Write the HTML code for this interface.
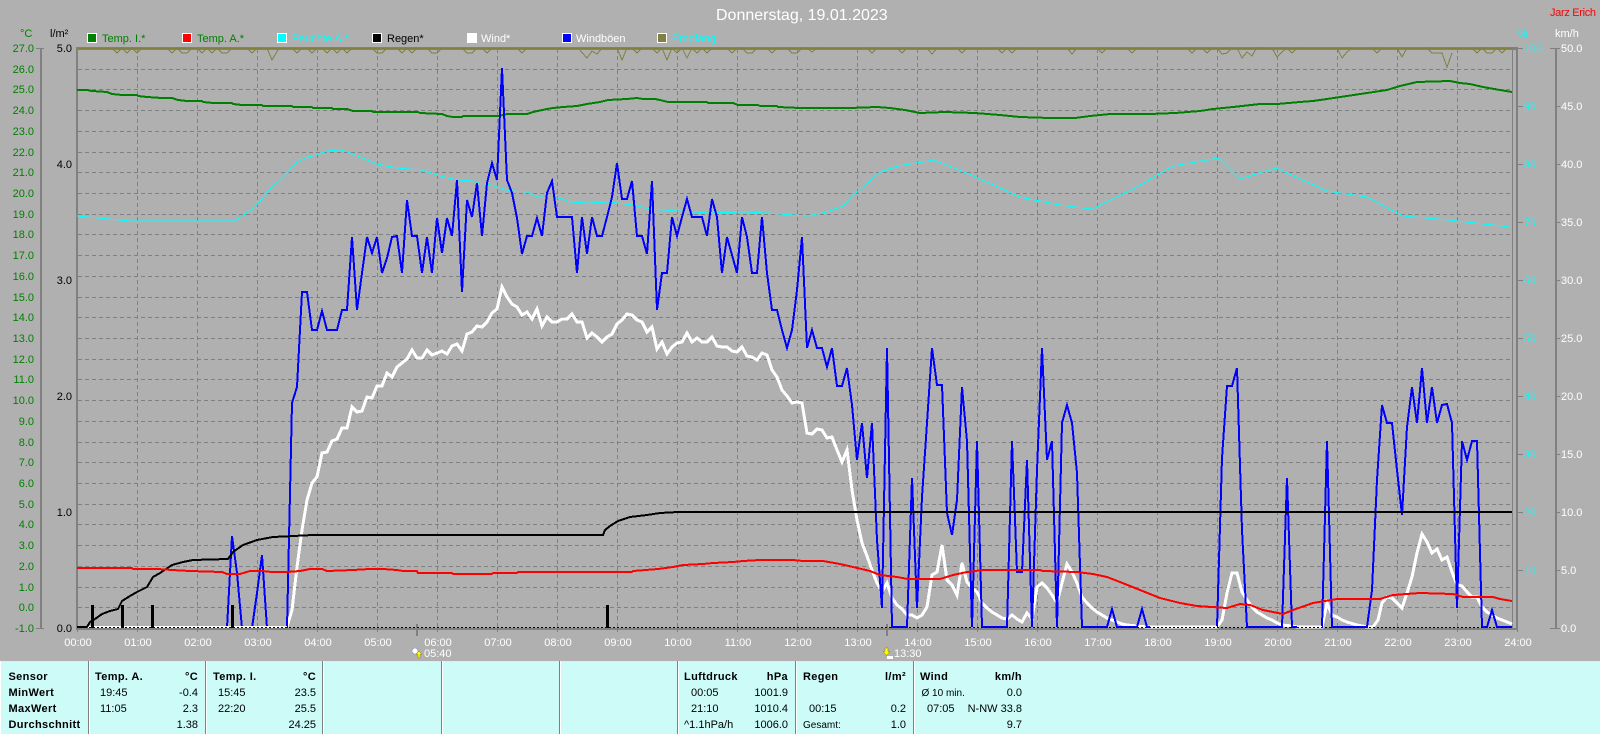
<!DOCTYPE html>
<html><head><meta charset="utf-8"><title>Donnerstag, 19.01.2023</title>
<style>
html,body{margin:0;padding:0;background:#b0b0b0;width:1600px;height:734px;overflow:hidden}
svg{display:block;font-family:"Liberation Sans",Arial,sans-serif;font-size:11px}
.c{text-anchor:middle}.e{text-anchor:end}.b{font-weight:bold;letter-spacing:.35px;fill:#000}
.l{fill:none;shape-rendering:crispEdges}
</style></head><body>
<svg width="1600" height="734" viewBox="0 0 1600 734" xmlns="http://www.w3.org/2000/svg">
<rect width="1600" height="734" fill="#b0b0b0"/>
<!-- grid -->
<path class="l" stroke="#808080" stroke-width="1" stroke-dasharray="4 3" d="M78 69.5H1512M78 89.5H1512M78 110.5H1512M78 131.5H1512M78 152.5H1512M78 172.5H1512M78 193.5H1512M78 214.5H1512M78 234.5H1512M78 255.5H1512M78 276.5H1512M78 297.5H1512M78 317.5H1512M78 338.5H1512M78 359.5H1512M78 379.5H1512M78 400.5H1512M78 421.5H1512M78 442.5H1512M78 462.5H1512M78 483.5H1512M78 504.5H1512M78 524.5H1512M78 545.5H1512M78 566.5H1512M78 587.5H1512M78 607.5H1512"/>
<path class="l" stroke="#808080" stroke-width="1" stroke-dasharray="4 3" d="M137.5 49V628M197.5 49V628M257.5 49V628M317.5 49V628M377.5 49V628M437.5 49V628M497.5 49V628M557.5 49V628M617.5 49V628M677.5 49V628M737.5 49V628M797.5 49V628M857.5 49V628M917.5 49V628M977.5 49V628M1037.5 49V628M1097.5 49V628M1157.5 49V628M1217.5 49V628M1277.5 49V628M1337.5 49V628M1397.5 49V628M1457.5 49V628"/>
<!-- frame -->
<rect x="76" y="47" width="1442" height="3" fill="#808080"/>
<rect x="76" y="47" width="2" height="582" fill="#808080"/>
<rect x="1516" y="47" width="2" height="582" fill="#808080"/>
<rect x="1512" y="48" width="1" height="581" fill="#808080"/>
<rect x="76" y="628" width="1442" height="2" fill="#808080"/>
<path class="l" stroke="#808080" d="M77.5 628V632M137.5 628V632M197.5 628V632M257.5 628V632M317.5 628V632M377.5 628V632M437.5 628V632M497.5 628V632M557.5 628V632M617.5 628V632M677.5 628V632M737.5 628V632M797.5 628V632M857.5 628V632M917.5 628V632M977.5 628V632M1037.5 628V632M1097.5 628V632M1157.5 628V632M1217.5 628V632M1277.5 628V632M1337.5 628V632M1397.5 628V632M1457.5 628V632M1517.5 628V632"/>
<rect x="416" y="624" width="2" height="12" fill="#808080"/>
<rect x="886" y="624" width="2" height="12" fill="#808080"/>
<!-- axes -->
<rect x="40" y="48" width="2" height="581" fill="#808080"/>
<path class="l" stroke="#808080" stroke-width="1" d="M36 48.5H44M36 628.5H44M1518 48.5H1523M1518 106.5H1523M1518 164.5H1523M1518 222.5H1523M1518 280.5H1523M1518 338.5H1523M1518 396.5H1523M1518 454.5H1523M1518 512.5H1523M1518 570.5H1523"/>
<rect x="1555" y="48" width="2" height="581" fill="#808080"/>
<path class="l" stroke="#808080" stroke-width="1" d="M1550 48.5H1560M1555 106.5H1560M1555 164.5H1560M1555 222.5H1560M1555 280.5H1560M1555 338.5H1560M1555 396.5H1560M1555 454.5H1560M1555 512.5H1560M1555 570.5H1560M1550 628.5H1560"/>
<!-- olive reception -->
<path class="l" stroke="#808040" stroke-width="1" d="M78 48.5H1512M112 48l5 5 5-5 5 5 5-5 5 5 5-5M167 48l5 5 5-5 5 5h5l5-5M197 48l5 5 5-5 5 5 5-5 5 5h5l5-5M247 48l5 5 5-5M267 48l5 12 7-12M292 48l5 5 5-5M307 48l5 5 5-5M322 48l5 5 5-5 5 5 5-5 5 5 5-5M372 48l5 5h5l5-5M397 48l5 5 5-5 5 5 5-5M427 48l5 5h5l5-5M462 48l5 5h5l5-5M482 48l5 5 5-5M517 48l5 5 5-5M578 48l9 10 5-7 5 3 5-6M617 48l5 12 5-12M632 48l5 5 5-5M652 48l5 5 5-5 5 12 5-12 5 5 5-5 5 10 5-10 5 5 5-5 5 5 5-5M727 48l5 5 5-5M742 48l5 5h5l5-5M767 48l5 5 5-5M787 48l5 5h5l5-5M807 48l5 4 5-4M867 48l5 5 5-5M897 48l5 5 5-5M927 48l5 6 5-6M957 48l5 5 5-5M997 48l5 5 5-5 5 5 5-5M1067 48l5 6 5-6M1097 48l5 5 5-5M1127 48l5 5 5-5M1187 48l5 5 5-5M1202 48l5 5 5-5M1217 48l5 6 5-1 5-5M1237 48l5 10 5-6 5 4 5-9M1272 48l5 9 5-5 5-4 5 5 5-5M1337 48l5 10 5-6 5-4M1372 48l5 5 5-5M1397 48l5 9 5-9M1427 48l5 5h5l5 0 5 14 5-14M1472 48l5 5 5-5 5 5h5l5-5 5 5 5-5"/>
<!-- cyan humidity -->
<polyline class="l" stroke="#00ffff" stroke-width="1" points="77,216 130,221 235,221 255,207 270,189 280,180 287,173 297,162 307,157 313,156 327,151 340,150 348,152 360,157 377,164 397,168 422,170 440,176 457,180 473,181 477,183 487,184 497,187 510,191 527,192 537,197 560,198 570,202 587,203 610,202 633,205 650,209 677,211 710,213 743,212 767,213 793,215 807,216 827,212 843,206 853,195 860,190 880,172 898,166 934,160 969,174 1020,197 1060,205 1092,209 1133,189 1173,166 1219,158 1240,179 1276,168 1327,191 1367,197 1403,216 1449,220 1510,227"/>
<!-- green temp I -->
<polyline class="l" stroke="#008000" stroke-width="2" points="77,90 87,90 92,91 107,92 112,94 122,95 137,95 138,96 147,97 162,98 172,98 178,100 187,101 202,101 203,102 213,103 232,103 233,104 242,105 262,105 263,106 292,106 293,107 312,107 313,108 332,108 333,109 347,109 353,111 372,111 373,112 418,112 420,113 442,114 447,116 453,117 462,117 463,116 498,116 507,114 527,114 533,112 547,109 553,108 563,107 577,106 587,104 600,102 608,100 627,99 637,98 643,99 655,99 660,100 668,102 687,102 688,102 707,102 708,103 733,103 738,105 758,105 760,106 777,106 778,107 800,108 850,108 877,107 890,108 905,110 920,113 945,112 975,113 1000,115 1020,117 1050,118 1075,118 1090,116 1110,114 1150,114 1175,113 1200,111 1213,109 1233,107 1260,104 1277,104 1300,102 1313,101 1327,99 1347,96 1367,93 1387,90 1400,86 1417,82 1450,81 1460,83 1470,84 1483,87 1500,90 1512,92"/>
<!-- white wind -->
<polyline class="l" stroke="#ffffff" stroke-width="3" points="287,627 292,610 297,567 302,530 307,500 312,483 317,477 322,453 327,452 332,441 337,439 342,428 347,428 352,407 357,412 362,411 367,397 372,398 377,386 382,386 387,373 392,377 397,367 402,363 407,359 412,350 417,358 422,358 427,350 432,355 437,353 442,351 447,354 452,346 457,344 462,351 467,334 472,332 477,326 482,327 487,322 492,313 497,309 502,287 507,297 512,304 517,307 522,315 527,312 532,319 537,309 542,326 547,317 552,322 557,322 562,319 567,319 572,314 577,322 582,322 587,338 592,333 597,337 602,342 607,337 612,334 617,324 622,320 627,314 632,315 637,320 642,322 647,332 652,327 657,349 662,342 667,354 672,347 677,343 682,342 687,333 692,342 697,338 702,342 707,342 712,337 717,346 722,347 727,347 732,351 737,352 742,347 747,356 752,357 757,360 762,353 767,355 772,370 777,377 782,390 787,396 792,403 797,402 802,403 807,433 812,434 817,429 822,430 827,438 832,437 837,450 842,462 847,450 852,490 857,520 862,543 867,556 872,570 877,583 882,592 887,583 892,598 897,605 902,609 907,615 912,615 917,618 922,615 927,607 932,575 937,572 942,545 947,580 952,585 957,595 962,563 967,582 972,588 977,592 982,603 987,608 992,612 997,615 1002,618 1007,619 1012,615 1017,619 1022,622 1027,613 1032,619 1037,587 1042,583 1047,588 1052,595 1057,603 1062,583 1067,564 1072,572 1077,583 1082,597 1087,603 1092,608 1097,612 1102,615 1107,618 1112,620 1117,622 1122,624 1127,625 1137,626 1147,627 1162,627 1217,627 1222,620 1227,593 1232,573 1237,573 1242,592 1247,600 1252,607 1257,612 1262,615 1267,618 1272,620 1277,623 1282,625 1292,626 1297,627 1322,627 1327,603 1332,615 1337,617 1342,620 1347,622 1357,625 1367,627 1373,627 1378,620 1382,603 1387,597 1392,598 1397,603 1402,608 1407,593 1412,577 1417,553 1422,534 1427,542 1432,553 1437,549 1442,560 1447,557 1452,572 1457,585 1462,586 1467,592 1472,597 1477,597 1482,607 1487,612 1492,615 1497,618 1502,620 1507,622 1512,624"/>
<!-- blue gusts -->
<path class="l" fill="none" stroke="#0000ff" stroke-width="2" d="M227 628L232 536 237 573 242 628M252 628L257 593 262 555 267 628M287 628L292 403 297 387 302 292 307 292 312 330 317 330 322 311 327 330 332 330 337 330 342 310 347 310 352 237 357 310 362 273 367 237 372 253 377 237 382 273 387 258 392 237 397 236 402 273 407 200 412 236 417 236 422 273 427 237 432 273 437 218 442 253 447 218 452 236 457 180 462 292 467 200 472 217 477 183 482 236 487 183 492 163 497 180 502 68 507 180 512 193 517 218 522 254 527 236 532 236 537 218 542 236 547 193 552 181 557 217 562 217 567 217 572 217 577 273 582 217 587 254 592 217 597 236 602 236 607 217 612 197 617 163 622 199 627 199 632 181 637 236 642 236 647 254 652 181 657 310 662 273 667 273 672 217 677 236 682 217 687 199 692 217 697 217 702 217 707 236 712 199 717 217 722 273 727 237 732 255 737 273 742 217 747 237 752 273 757 273 762 217 767 273 772 310 777 310 782 330 787 348 792 330 797 290 802 237 807 348 812 330 817 348 822 348 827 367 832 348 837 386 842 386 847 368 852 405 857 460 862 423 867 478 872 423 877 540 882 608 887 348 892 627 907 627 912 478 917 608 922 497 927 423 932 348 937 385 942 385 947 513 952 535 957 500 962 387 967 441 972 627 977 441 982 627 1007 627 1012 441 1017 572 1022 572 1027 460 1032 627 1037 470 1042 348 1047 460 1052 441 1057 627 1062 423 1067 405 1072 423 1077 473 1082 627 1107 627 1112 609 1117 627 1137 627 1142 609 1147 627 1217 627 1222 458 1227 386 1232 386 1237 368 1242 530 1247 627 1282 627 1287 478 1292 627 1322 627 1327 441 1332 627 1367 627 1372 590 1377 480 1382 405 1387 423 1392 423 1397 470 1402 515 1407 427 1412 387 1417 423 1422 368 1427 423 1432 387 1437 423 1442 405 1447 404 1452 423 1457 608 1462 441 1467 460 1472 441 1477 441 1482 627 1487 627 1492 610 1497 627 1512 627"/>
<!-- zero-wind baseline painted over gusts, then dots -->
<path class="l" stroke="#ffffff" stroke-width="2" d="M77 627H287M1150 627H1217M1297 627H1322"/>
<path class="l" stroke="#000000" stroke-width="1" stroke-dasharray="2 2" d="M77 627.5H1512"/>
<!-- black rain -->
<polyline class="l" stroke="#000000" stroke-width="2" points="77,627 87,627 90,622 95,619 102,614 110,611 118,609 122,601 130,596 137,592 147,587 153,577 160,573 172,565 183,562 193,560 228,559 233,552 243,545 257,540 273,537 293,536 313,535 603,535 605,530 610,526 618,521 630,517 647,515 660,513 678,512 1512,512"/>
<!-- red temp A -->
<polyline class="l" stroke="#ff0000" stroke-width="2" points="77,568 132,568 133,569 157,569 172,570 190,571 222,572 227,574 240,574 250,571 262,571 272,572 287,572 300,571 310,569 322,569 327,571 353,570 370,569 383,569 397,570 403,571 417,571 418,573 452,573 453,574 492,574 493,573 517,573 518,572 632,572 633,571 658,569 673,567 683,565 703,564 713,563 733,562 743,561 760,560 793,560 803,561 823,561 840,564 853,567 870,571 880,575 897,577 908,579 940,579 953,575 967,572 983,570 1040,570 1043,571 1077,572 1093,574 1107,577 1120,582 1140,590 1160,598 1180,603 1197,606 1227,608 1240,604 1250,605 1263,610 1283,614 1293,610 1313,603 1337,599 1380,599 1393,595 1420,593 1453,594 1463,597 1493,597 1500,599 1512,601"/>
<!-- rain bars -->
<path fill="#000" d="M91 605h3v23h-3zM121 605h3v23h-3zM151 605h3v23h-3zM231 605h3v23h-3zM606 605h3v23h-3z"/>
<!-- title and header -->
<text x="716" y="20" fill="#fff" style="font-size:16px">Donnerstag, 19.01.2023</text>
<text x="1550" y="16" fill="#f00" textLength="46">Jarz Erich</text>
<text x="20" y="37" fill="#008000">°C</text>
<text x="50" y="37" fill="#000">l/m²</text>
<text x="1518" y="37" fill="#0ff">%</text>
<text x="1555" y="37" fill="#fff">km/h</text>
<!-- legend -->
<g stroke="#fff" stroke-width="1" shape-rendering="crispEdges">
<rect x="87.5" y="33.5" width="9" height="9" fill="#008000"/>
<rect x="182.5" y="33.5" width="9" height="9" fill="#f00"/>
<rect x="277.5" y="33.5" width="9" height="9" fill="#0ff"/>
<rect x="372.5" y="33.5" width="9" height="9" fill="#000"/>
<rect x="467.5" y="33.5" width="9" height="9" fill="#fff"/>
<rect x="562.5" y="33.5" width="9" height="9" fill="#00f"/>
<rect x="657.5" y="33.5" width="9" height="9" fill="#808040"/>
</g>
<g>
<text x="102" y="42" fill="#008000">Temp. I.*</text>
<text x="197" y="42" fill="#008000">Temp. A.*</text>
<text x="292" y="42" fill="#0ff">Feuchte A.*</text>
<text x="387" y="42" fill="#000">Regen*</text>
<text x="481" y="42" fill="#fff">Wind*</text>
<text x="576" y="42" fill="#fff">Windböen</text>
<text x="672" y="42" fill="#0ff">Empfang</text>
</g>
<!-- left temp labels -->
<g class="e" fill="#008000" text-anchor="end">
<text x="34" y="52">27.0</text><text x="34" y="73">26.0</text><text x="34" y="93">25.0</text><text x="34" y="114">24.0</text><text x="34" y="135">23.0</text><text x="34" y="156">22.0</text><text x="34" y="176">21.0</text><text x="34" y="197">20.0</text><text x="34" y="218">19.0</text><text x="34" y="238">18.0</text><text x="34" y="259">17.0</text><text x="34" y="280">16.0</text><text x="34" y="301">15.0</text><text x="34" y="321">14.0</text><text x="34" y="342">13.0</text><text x="34" y="363">12.0</text><text x="34" y="383">11.0</text><text x="34" y="404">10.0</text><text x="34" y="425">9.0</text><text x="34" y="446">8.0</text><text x="34" y="466">7.0</text><text x="34" y="487">6.0</text><text x="34" y="508">5.0</text><text x="34" y="528">4.0</text><text x="34" y="549">3.0</text><text x="34" y="570">2.0</text><text x="34" y="591">1.0</text><text x="34" y="611">0.0</text><text x="34" y="632">-1.0</text>
</g>
<g fill="#000" text-anchor="end">
<text x="72" y="52">5.0</text><text x="72" y="168">4.0</text><text x="72" y="284">3.0</text><text x="72" y="400">2.0</text><text x="72" y="516">1.0</text><text x="72" y="632">0.0</text>
</g>
<!-- right labels -->
<g fill="#0ff">
<text x="1524" y="52">100</text><text x="1524" y="110">90</text><text x="1524" y="168">80</text><text x="1524" y="226">70</text><text x="1524" y="284">60</text><text x="1524" y="342">50</text><text x="1524" y="400">40</text><text x="1524" y="458">30</text><text x="1524" y="516">20</text><text x="1524" y="574">10</text>
</g>
<g fill="#fff">
<text x="1561" y="52">50.0</text><text x="1561" y="110">45.0</text><text x="1561" y="168">40.0</text><text x="1561" y="226">35.0</text><text x="1561" y="284">30.0</text><text x="1561" y="342">25.0</text><text x="1561" y="400">20.0</text><text x="1561" y="458">15.0</text><text x="1561" y="516">10.0</text><text x="1561" y="574">5.0</text><text x="1561" y="632">0.0</text>
</g>
<!-- time labels -->
<g fill="#fff" text-anchor="middle">
<text x="78" y="646">00:00</text><text x="138" y="646">01:00</text><text x="198" y="646">02:00</text><text x="258" y="646">03:00</text><text x="318" y="646">04:00</text><text x="378" y="646">05:00</text><text x="438" y="646">06:00</text><text x="498" y="646">07:00</text><text x="558" y="646">08:00</text><text x="618" y="646">09:00</text><text x="678" y="646">10:00</text><text x="738" y="646">11:00</text><text x="798" y="646">12:00</text><text x="858" y="646">13:00</text><text x="918" y="646">14:00</text><text x="978" y="646">15:00</text><text x="1038" y="646">16:00</text><text x="1098" y="646">17:00</text><text x="1158" y="646">18:00</text><text x="1218" y="646">19:00</text><text x="1278" y="646">20:00</text><text x="1338" y="646">21:00</text><text x="1398" y="646">22:00</text><text x="1458" y="646">23:00</text><text x="1518" y="646">24:00</text>
</g>
<!-- sun icons -->
<circle cx="415" cy="651" r="3" fill="#fff" stroke="#8090c0" stroke-width=".6"/>
<path fill="#ff0" stroke="#806000" stroke-width=".4" d="M419 651l3 3.5h-2v3.5h-2v-3.5h-2z"/>
<text x="424" y="657" fill="#fff">05:40</text>
<path fill="#ff0" stroke="#806000" stroke-width=".4" d="M885 648h3v3.5h2l-3.500 4-3.500-4h2z"/>
<path fill="#fff" d="M887 656h6v3h-6z"/>
<text x="894" y="657" fill="#fff">13:30</text>
<!-- bottom panel -->
<rect x="0" y="661" width="1600" height="73" fill="#ccfbf8"/>
<rect x="0" y="661" width="1600" height="1" fill="#e8e8e8"/>
<rect x="0" y="661" width="1" height="73" fill="#fff"/>
<g fill="#808080">
<rect x="88" y="661" width="1" height="73"/><rect x="205" y="661" width="1" height="73"/><rect x="322" y="661" width="1" height="73"/><rect x="441" y="661" width="1" height="73"/><rect x="559" y="661" width="1" height="73"/><rect x="677" y="661" width="1" height="73"/><rect x="795" y="661" width="1" height="73"/><rect x="913" y="661" width="1" height="73"/>
</g>
<g fill="#fff">
<rect x="89" y="661" width="1" height="73"/><rect x="206" y="661" width="1" height="73"/><rect x="323" y="661" width="1" height="73"/><rect x="442" y="661" width="1" height="73"/><rect x="560" y="661" width="1" height="73"/><rect x="678" y="661" width="1" height="73"/><rect x="796" y="661" width="1" height="73"/><rect x="914" y="661" width="1" height="73"/>
</g>
<g fill="#000">
<text class="b" x="8.500" y="680">Sensor</text>
<text class="b" x="8.500" y="696">MinWert</text>
<text class="b" x="8.500" y="712">MaxWert</text>
<text class="b" x="8.500" y="728">Durchschnitt</text>

<text class="b" x="95" y="680">Temp. A.</text>
<text class="b" x="198" y="680" text-anchor="end">°C</text>
<text x="100" y="696">19:45</text><text x="198" y="696" text-anchor="end">-0.4</text>
<text x="100" y="712">11:05</text><text x="198" y="712" text-anchor="end">2.3</text>
<text x="198" y="728" text-anchor="end">1.38</text>

<text class="b" x="213" y="680">Temp. I.</text>
<text class="b" x="316" y="680" text-anchor="end">°C</text>
<text x="218" y="696">15:45</text><text x="316" y="696" text-anchor="end">23.5</text>
<text x="218" y="712">22:20</text><text x="316" y="712" text-anchor="end">25.5</text>
<text x="316" y="728" text-anchor="end">24.25</text>

<text class="b" x="684" y="680">Luftdruck</text>
<text class="b" x="788" y="680" text-anchor="end">hPa</text>
<text x="691" y="696">00:05</text><text x="788" y="696" text-anchor="end">1001.9</text>
<text x="691" y="712">21:10</text><text x="788" y="712" text-anchor="end">1010.4</text>
<text x="684" y="728">^1.1hPa/h</text><text x="788" y="728" text-anchor="end">1006.0</text>

<text class="b" x="803" y="680">Regen</text>
<text class="b" x="906" y="680" text-anchor="end">l/m²</text>
<text x="809" y="712">00:15</text><text x="906" y="712" text-anchor="end">0.2</text>
<text x="803" y="728" style="font-size:10px">Gesamt:</text><text x="906" y="728" text-anchor="end">1.0</text>

<text class="b" x="920" y="680">Wind</text>
<text class="b" x="1022" y="680" text-anchor="end">km/h</text>
<text x="921.500" y="696" style="font-size:10px">Ø 10 min.</text><text x="1022" y="696" text-anchor="end">0.0</text>
<text x="927" y="712">07:05</text><text x="1022" y="712" text-anchor="end">N-NW 33.8</text>
<text x="1022" y="728" text-anchor="end">9.7</text>
</g>
</svg>
</body></html>
